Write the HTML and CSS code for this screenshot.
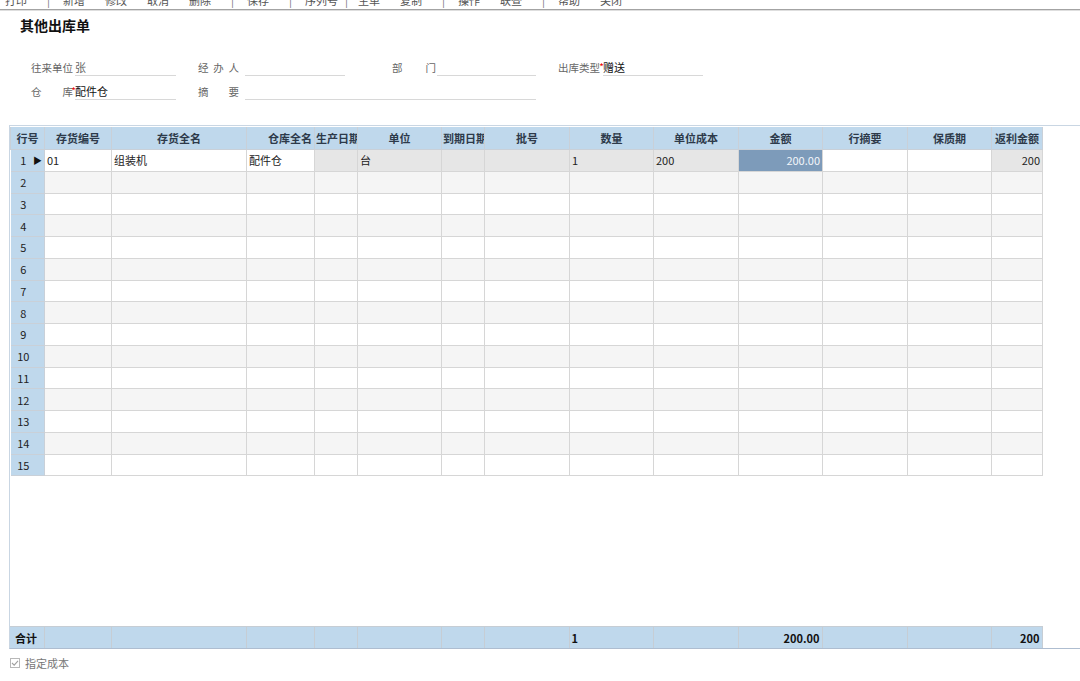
FILE: index.html
```html
<!DOCTYPE html>
<html lang="zh-CN">
<head>
    <meta charset="UTF-8">
    <title>其他出库单</title>
    <link rel="stylesheet" href="styles.css">
</head>
<body>
    <div class="toolbar">
        <span class="tb-btn">打印</span><span class="tb-sep">|</span>
        <span class="tb-btn">新增</span><span class="tb-btn">修改</span><span class="tb-btn">取消</span><span class="tb-btn">删除</span><span class="tb-sep">|</span>
        <span class="tb-btn">保存</span><span class="tb-sep">|</span>
        <span class="tb-btn">序列号</span><span class="tb-sep tight">|</span>
        <span class="tb-btn">生单</span><span class="tb-btn">复制</span><span class="tb-sep">|</span>
        <span class="tb-btn">操作</span><span class="tb-btn">联查</span><span class="tb-sep">|</span>
        <span class="tb-btn">帮助</span><span class="tb-btn">关闭</span>
    </div>

    <h1 class="title">其他出库单</h1>

    <div class="head-form">
        <div class="form-row">
            <label class="lbl lbl-a">往来单位</label>
            <div class="box box-a muted">张</div>
            <label class="lbl lbl-b spread">经办人</label>
            <div class="box box-b"></div>
            <label class="lbl lbl-c spread">部门</label>
            <div class="box box-c"></div>
            <label class="lbl lbl-d">出库类型<span class="req">*</span></label>
            <div class="box box-d">赠送</div>
        </div>
        <div class="form-row">
            <label class="lbl lbl-a spread">仓库<span class="req">*</span></label>
            <div class="box box-a">配件仓</div>
            <label class="lbl lbl-b spread">摘要</label>
            <div class="box box-wide"></div>
        </div>
    </div>

    <div class="grid-panel">
        <table class="grid">
            <colgroup>
                <col style="width:34px"><col style="width:67px"><col style="width:135px"><col style="width:68px">
                <col style="width:43px"><col style="width:84px"><col style="width:43px"><col style="width:85px">
                <col style="width:84px"><col style="width:85px"><col style="width:84px"><col style="width:85px">
                <col style="width:84px"><col style="width:51px">
            </colgroup>
            <thead>
                <tr>
                    <th>行号</th><th>存货编号</th><th>存货全名</th><th class="th-r">仓库全名</th><th class="th-clip">生产日期</th>
                    <th>单位</th><th class="th-clip">到期日期</th><th>批号</th><th>数量</th><th>单位成本</th>
                    <th>金额</th><th>行摘要</th><th>保质期</th><th>返利金额</th>
                </tr>
            </thead>
            <tbody id="rows">
                <tr>
                    <td class="rn">1<span class="cur">&#9654;</span></td>
                    <td>01</td><td>组装机</td><td>配件仓</td>
                    <td class="ro"></td><td class="ro">台</td><td class="ro"></td><td class="ro"></td>
                    <td class="ro">1</td><td class="ro">200</td>
                    <td class="sel num">200.00</td><td></td><td></td><td class="ro num">200</td>
                </tr>
            </tbody>
        </table>

        <table class="grid grid-foot">
            <colgroup>
                <col style="width:34px"><col style="width:67px"><col style="width:135px"><col style="width:68px">
                <col style="width:43px"><col style="width:84px"><col style="width:43px"><col style="width:85px">
                <col style="width:84px"><col style="width:85px"><col style="width:84px"><col style="width:85px">
                <col style="width:84px"><col style="width:51px">
            </colgroup>
            <tr>
                <td>合计</td><td></td><td></td><td></td><td></td><td></td><td></td><td></td>
                <td>1</td><td></td><td class="num">200.00</td><td></td><td></td><td class="num">200</td>
            </tr>
        </table>
    </div>

    <div class="check-line">
        <svg width="10" height="10" viewBox="0 0 10 10"><rect x="0.5" y="0.5" width="9" height="9" fill="#fff" stroke="#b8b8b8"/><path d="M2 5 L4.2 7.2 L8 2.8" fill="none" stroke="#a0a0a0" stroke-width="1.1"/></svg>
        <span>指定成本</span>
    </div>

    <script>
        // fill the empty rows 2..15
        const tbody = document.getElementById('rows');
        for (let i = 2; i <= 15; i++) {
            const tr = document.createElement('tr');
            if (i % 2 === 0) tr.className = 'alt';
            let html = '<td class="rn">' + i + '</td>';
            for (let c = 0; c < 13; c++) html += '<td></td>';
            tr.innerHTML = html;
            tbody.appendChild(tr);
        }
    </script>
</body>
</html>
```

FILE: styles.css
```css
body {
    margin: 0;
    font-family: "Noto Sans CJK SC", "Liberation Sans", sans-serif;
    font-size: 11px;
    color: #222;
    background: #fff;
}
.toolbar {
    display: flex;
    height: 18px;
    line-height: 18px;
    margin-top: -9px;
    padding-left: 0;
    border-bottom: 1px solid #a3a3a3;
    box-shadow: 0 1px 0 #dedede;
    color: #555;
    white-space: nowrap;
}
.tb-btn {
    padding: 0 10px;
}
.tb-btn:first-child {
    margin-left: -5px;
}
.tb-sep {
    margin-left: 10px;
    padding-right: 3px;
    color: #777;
}
.tb-sep.tight {
    margin-left: -3px;
    padding-right: 0;
}
.title {
    margin: 5px 0 0 20px;
    font-size: 14px;
    line-height: 20px;
    font-weight: bold;
    color: #111;
}
.head-form {
    margin-top: 24px;
    padding-left: 31px;
}
.form-row {
    display: flex;
    align-items: flex-end;
    height: 17px;
    margin-bottom: 7px;
}
.lbl {
    position: relative;
    height: 16px;
    line-height: 16px;
    font-size: 10.5px;
    color: #666;
    white-space: nowrap;
    box-sizing: border-box;
}
.spread {
    text-align: justify;
    text-align-last: justify;
}
.lbl-a { width: 44px; padding-right: 2px; }
.lbl-b { width: 47px; margin-left: 22px; padding-right: 6px; }
.lbl-c { width: 45px; margin-left: 47px; padding-right: 1px; }
.lbl-d { width: 45px; margin-left: 22px; }
.req {
    position: absolute;
    right: -1px;
    top: -1px;
    color: #e00;
    font-size: 10px;
}
.box {
    height: 16px;
    line-height: 16px;
    border-bottom: 1px solid #d8d8d8;
    color: #111;
}
.box.muted {
    color: #666;
}
.box-a { width: 101px; }
.box-b { width: 100px; }
.box-c { width: 99px; }
.box-d { width: 100px; }
.box-wide { width: 291px; }

.grid-panel {
    display: flex;
    flex-direction: column;
    margin: 25px 0 0 9px;
    padding-top: 1px;
    box-sizing: border-box;
    height: 524px;
    border-top: 1px solid #c9d6e3;
    border-left: 1px solid #c9d6e3;
    border-bottom: 1px solid #aebdd0;
}
.grid {
    width: 1032px;
    table-layout: fixed;
    border-collapse: collapse;
}
.grid th {
    height: 22px;
    padding: 0;
    background: #bfd8ec;
    border: 1px solid #c9d0d8;
    border-top: none;
    color: #2d3a4a;
    font-weight: bold;
    text-align: center;
    white-space: nowrap;
    overflow: hidden;
}
.grid th.th-r {
    text-align: right;
    padding-right: 2px;
}
.grid th.th-clip {
    text-align: left;
    padding-left: 1px;
}
.grid td {
    height: 20.75px;
    padding: 0 2px;
    border: 1px solid #d6d6d6;
    background: #fff;
    white-space: nowrap;
    overflow: hidden;
}
.grid tr.alt td {
    background: #f5f5f5;
}
.grid td.rn {
    position: relative;
    background: #bfd8ec;
    border-color: #c9d0d8;
    text-align: center;
    padding-right: 10px;
    border-left: none;
}
.grid tr.alt td.rn {
    background: #bfd8ec;
}
.cur {
    position: absolute;
    right: 2px;
    top: 4px;
    font-size: 9px;
    color: #111;
}
.grid td.ro {
    background: #e6e6e6;
}
.grid td.sel {
    background: #7d9bba;
    color: #f4f7fa;
}
.grid td.num {
    text-align: right;
}
.grid-foot {
    margin-top: auto;
}
.grid-foot td {
    height: 21px;
    background: #bfd8ec;
    border: 1px solid #c6cdd4;
    border-bottom: none;
    font-weight: bold;
    color: #111;
}
.grid-foot td:first-child {
    border-left: none;
    padding-left: 5px;
}
.check-line {
    display: flex;
    align-items: center;
    gap: 5px;
    margin: 6px 0 0 10px;
    color: #777;
}
```
